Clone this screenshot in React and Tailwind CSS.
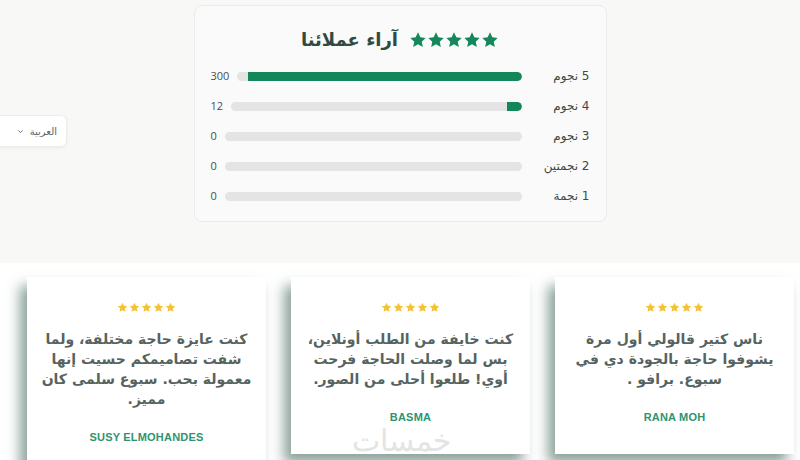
import React from 'react';

const ratings = [
  { label: '5 نجوم', count: 300 },
  { label: '4 نجوم', count: 12 },
  { label: '3 نجوم', count: 0 },
  { label: '2 نجمتين', count: 0 },
  { label: '1 نجمة', count: 0 },
];

const reviews = [
  { name: 'RANA MOH', lines: ['ناس كتير قالولي أول مرة', 'يشوفوا حاجة بالجودة دي في', 'سبوع. برافو .'] },
  { name: 'BASMA', lines: ['كنت خايفة من الطلب أونلاين،', 'بس لما وصلت الحاجة فرحت', 'أوي! طلعوا أحلى من الصور.'] },
  { name: 'SUSY ELMOHANDES', lines: ['كنت عايزة حاجة مختلفة، ولما', 'شفت تصاميمكم حسيت إنها', 'معمولة بحب. سبوع سلمى كان', 'مميز.'] },
];

const Star = ({ className }) => (
  <svg viewBox="0 0 24 24" className={className} fill="currentColor">
    <path d="M12 1.8l3.1 6.6 7.1.9-5.2 4.9 1.4 7.1L12 17.8l-6.4 3.5 1.4-7.1L1.8 9.3l7.1-.9z" />
  </svg>
);

const App = () => {
  const total = ratings.reduce((s, r) => s + r.count, 0);

  return (
    <div className="relative w-[800px] h-[460px] overflow-hidden bg-white font-['Open_Sans','DejaVu_Sans',sans-serif]">
      {/* top summary */}
      <div className="relative h-[263px] bg-[#f8f8f7] pt-[5px]">
        <div className="absolute left-[-10px] top-[115px] h-[32px] w-[77px] rounded-md border border-[#eceeed] bg-white shadow-[0_1px_3px_rgba(0,0,0,0.06)] flex items-center justify-end pr-[9px]">
          <div dir="rtl" className="flex items-center gap-[6px] text-[10px] text-[#5b6361] font-['DejaVu_Sans',sans-serif]">
            <span>العربية</span>
            <svg viewBox="0 0 10 10" className="w-[7px] h-[7px] text-[#6b7270]" fill="none" stroke="currentColor" strokeWidth="1.4">
              <path d="M2 3.5l3 3 3-3" />
            </svg>
          </div>
        </div>

        <div className="mx-auto w-[413px] h-[217px] rounded-lg border border-[#e9ecea] bg-[#f9faf9] pt-[22px] px-[16px]">
          <div dir="rtl" className="flex items-center justify-center gap-[11px] h-[24px]">
            <div className="flex text-[#15885b]">
              {[0, 1, 2, 3, 4].map(i => <Star key={i} className="w-[18px] h-[18px]" />)}
            </div>
            <h2 className="text-[18px] font-bold text-[#2e4a43] font-['DejaVu_Sans',sans-serif] leading-[24px]">آراء عملائنا</h2>
          </div>

          <div className="mt-[9px]">
            {ratings.map(r => (
              <div key={r.label} dir="rtl" className="flex items-center h-[30px]">
                <span className="w-[68px] shrink-0 text-[12px] text-[#3d4a47] font-['DejaVu_Sans',sans-serif]">{r.label}</span>
                <div className="flex-1 h-[9px] rounded-full bg-[#e3e4e3] overflow-hidden">
                  <div
                    className="h-full rounded-s-full bg-[#13875a]"
                    style={{ width: r.count ? `${Math.max((r.count / total) * 100, 5)}%` : 0 }}
                  />
                </div>
                <span className="ms-[8px] text-[11px] text-[#4a4f4d]">{r.count}</span>
              </div>
            ))}
          </div>
        </div>
      </div>

      {/* review cards */}
      <div dir="rtl" className="flex items-start gap-[25px] pt-[14px] pr-[6px]">
        {reviews.map(rv => (
          <div key={rv.name} className="w-[239px] shrink-0 bg-white pt-[25px] pb-[28px] text-center shadow-[-7px_9px_12px_0_rgba(45,85,70,0.55)]">
            <div className="flex justify-center gap-[1px] text-[#f2c23a]">
              {[0, 1, 2, 3, 4].map(i => <Star key={i} className="w-[11px] h-[11px]" />)}
            </div>
            <p className="mt-[16px] text-[14px] leading-[20px] font-bold text-[#56635f] font-['DejaVu_Sans',sans-serif]">
              {rv.lines.map((l, i) => (
                <React.Fragment key={i}>
                  {l}
                  {i < rv.lines.length - 1 && <br />}
                </React.Fragment>
              ))}
            </p>
            <div className="mt-[20px] text-[11px] font-bold tracking-[0.2px] text-[#2e9470] font-['Liberation_Sans',sans-serif]" dir="ltr">
              {rv.name}
            </div>
          </div>
        ))}
      </div>

      <div className="absolute left-[352px] top-[418px] text-[30px] font-light text-[#e4e4e4] font-['DejaVu_Sans',sans-serif] pointer-events-none" dir="rtl">
        خمسات
      </div>
    </div>
  );
};

export default App;
